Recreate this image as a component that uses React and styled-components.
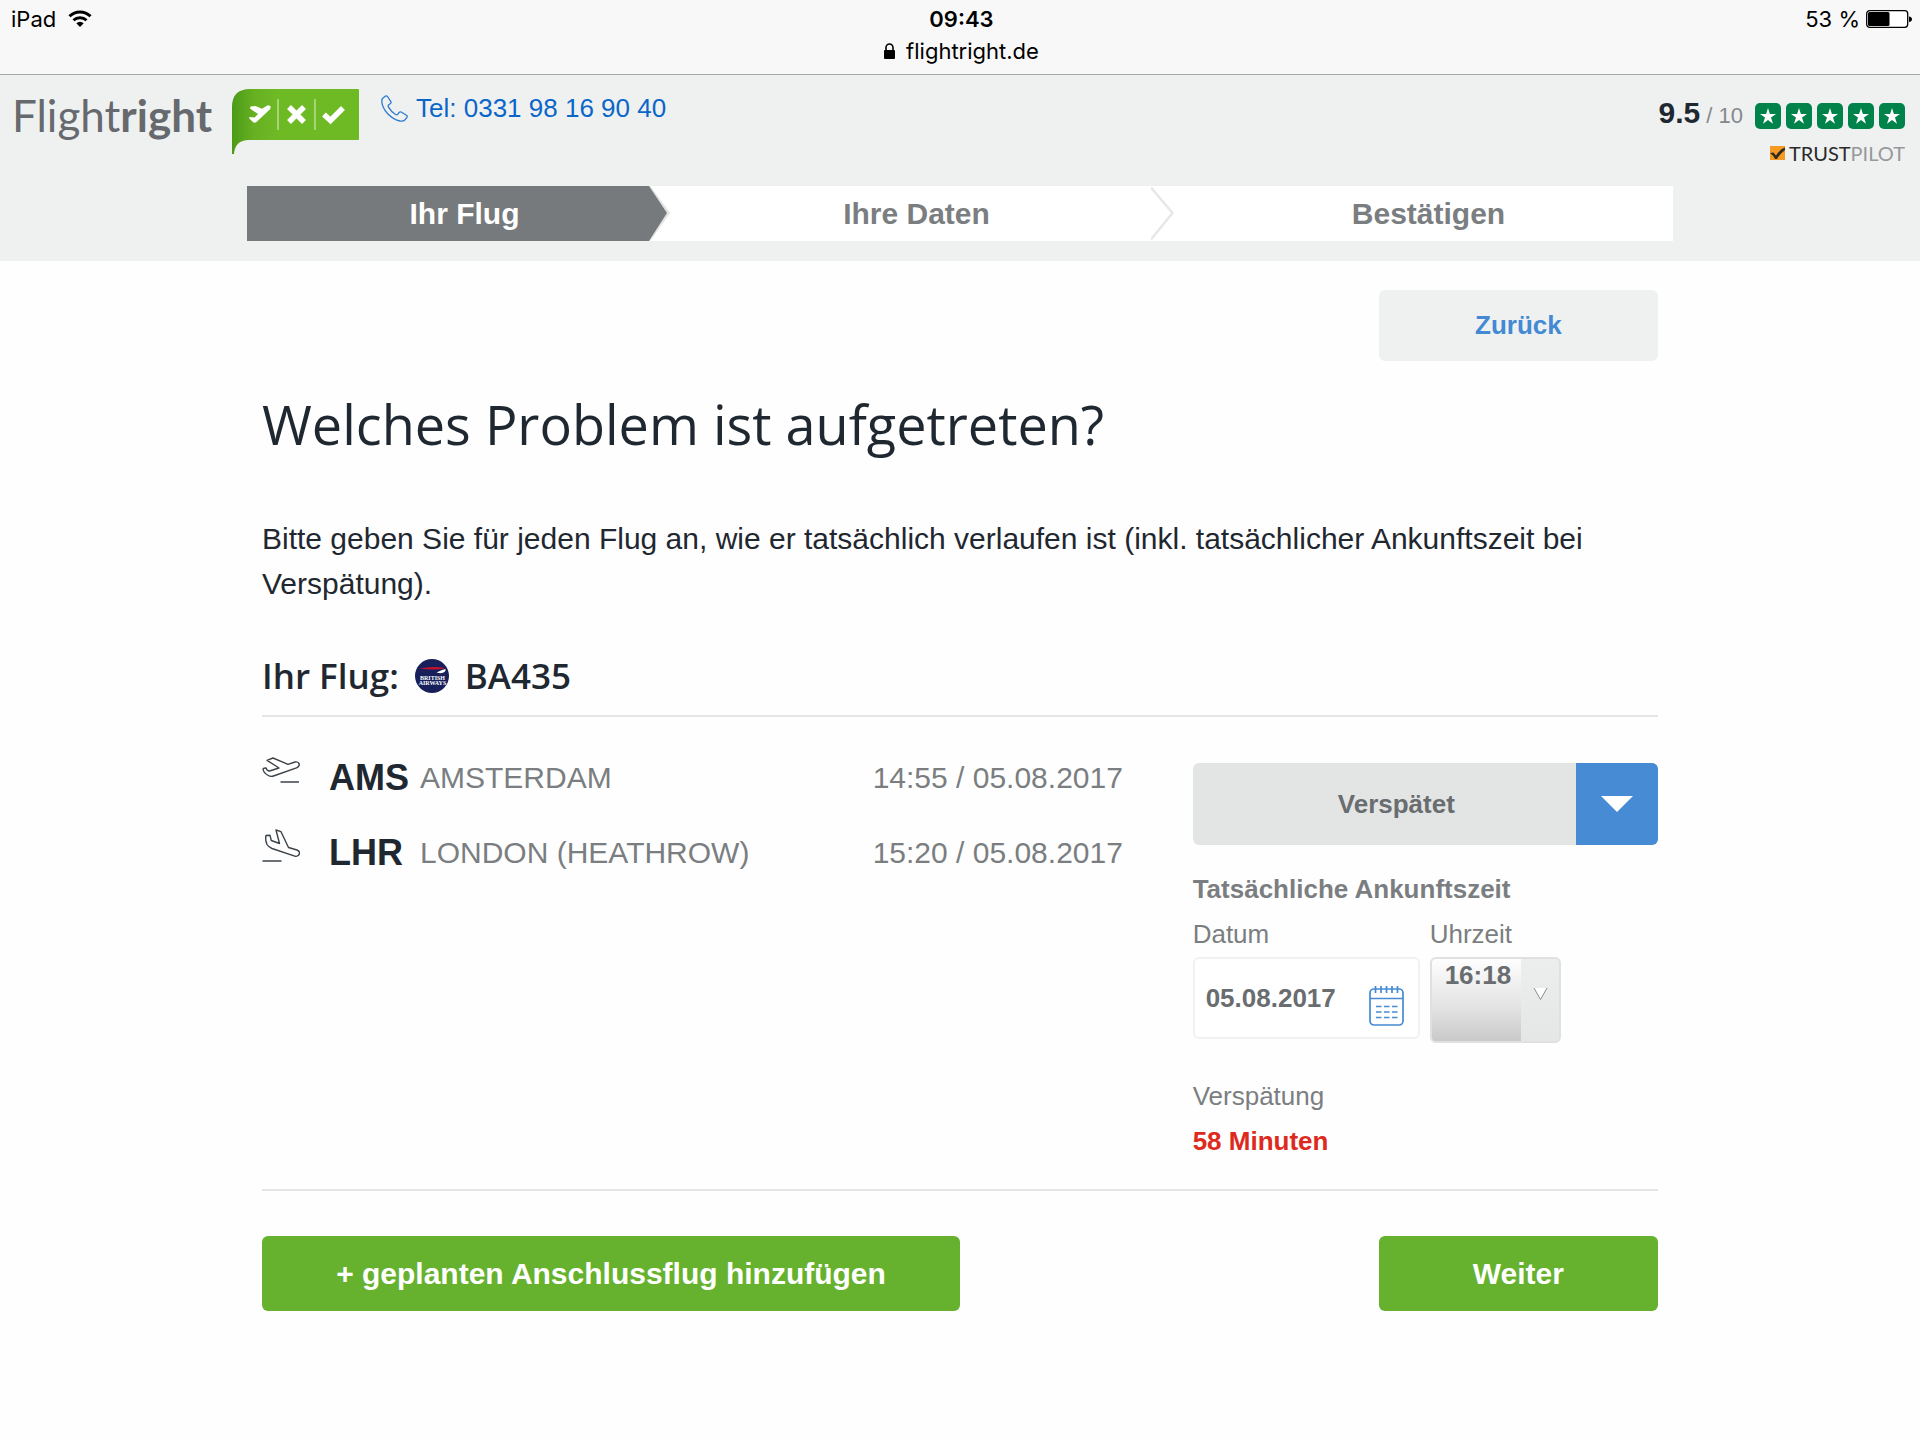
import React, { useState } from 'react';
import styled, { createGlobalStyle } from 'styled-components';

const GlobalStyle = createGlobalStyle`
    * {
        box-sizing: border-box;
    }
    body {
        margin: 0;
        background: #fefefe;
        color: #1f2830;
        font-family: "Liberation Sans", Arial, sans-serif;
    }
    button, input, select {
        font-family: inherit;
        margin: 0;
    }
    svg {
        display: block;
        flex: none;
    }
`

/* ---------- status bar ---------- */
const StatusBar = styled.div`
    display: grid;
    grid-template-columns: 1fr auto 1fr;
    align-items: start;
    height: 75px;
    padding: 6px 8px 0 11px;
    background: #f8f8f8;
    border-bottom: 1px solid #a6a7a8;
    color: #000;
    font-family: Inter, sans-serif;
    font-size: 22px;
    line-height: 26px;
`
const StatusItem = styled.div`
    display: flex;
    align-items: center;
    gap: ${props => props.$gap}px;
    justify-content: ${props => props.$end ? 'flex-end' : 'flex-start'};
`
const StatusCenter = styled.div`
    display: flex;
    flex-direction: column;
    align-items: center;
    gap: 6px;
`
const Clock = styled.div`
    font-weight: 600;
`

/* ---------- header ---------- */
const Header = styled.header`
    height: 186px;
    background: #eff1f1;
`
const HeaderTop = styled.div`
    display: flex;
    align-items: flex-start;
    height: 111px;
    padding: 14px 15px 0 12px;
`
const Brand = styled.a`
    display: flex;
    align-items: flex-start;
    gap: 20px;
    color: #66696e;
    text-decoration: none;
`
const BrandName = styled.span`
    font-family: Lato, sans-serif;
    font-size: 44px;
    font-weight: 400;
    line-height: 52px;
    b {
        font-weight: 700;
    }
`
const Phone = styled.a`
    display: flex;
    align-items: center;
    gap: 8px;
    margin: 4px 0 0 22px;
    color: #0a66c8;
    font-size: 26px;
    line-height: 30px;
    text-decoration: none;
`
const Rating = styled.div`
    display: flex;
    flex-direction: column;
    align-items: flex-end;
    gap: 1px;
    margin-left: auto;
`
const Score = styled.div`
    display: flex;
    align-items: baseline;
    color: #85888a;
    font-size: 22px;
    line-height: 48px;
    gap: 6px;
    b {
        color: #1f2830;
        font-size: 30px;
    }
`
const Stars = styled.span`
    display: flex;
    align-self: center;
    gap: 5px;
    margin: 2px 0 0 6px;
`
const Pilot = styled.div`
    display: flex;
    align-items: center;
    gap: 4px;
    color: #96989a;
    font-family: Lato, sans-serif;
    font-size: 20px;
    line-height: 24px;
    span {
        color: #2a2a2a;
    }
`

/* ---------- steps ---------- */
const Steps = styled.ol`
    display: grid;
    grid-template-columns: 402fr 502fr 522fr;
    max-width: 1426px;
    height: 55px;
    margin: 0 auto;
    padding: 0;
    list-style: none;
    background: #fff;
`
const Step = styled.li`
    position: relative;
    display: flex;
    align-items: center;
    justify-content: center;
    padding-left: 33px;
    background: ${props => props.$active ? '#777a7d' : 'transparent'};
    color: ${props => props.$active ? '#fff' : '#7b7e81'};
    font-size: 30px;
    font-weight: bold;
    svg {
        position: absolute;
        top: 0;
        left: 100%;
        z-index: 1;
    }
`

/* ---------- content ---------- */
const Main = styled.main`
    display: flex;
    flex-direction: column;
    max-width: 1396px;
    margin: 0 auto;
    padding-top: 29px;
`
const Button = styled.button`
    width: ${props => props.$wide ? '50%' : '20%'};
    height: ${props => props.$light ? 71 : 75}px;
    padding: 0;
    border: 0;
    border-radius: 6px;
    background: ${props => props.$light ? '#eff1f1' : '#66b22e'};
    color: ${props => props.$light ? '#4489d4' : '#fff'};
    font-size: ${props => props.$light ? 26 : 30}px;
    font-weight: bold;
    cursor: pointer;
`
const BackRow = styled.div`
    display: flex;
    justify-content: flex-end;
`
const Title = styled.h1`
    margin: 25px 0 0;
    font-family: "Open Sans", sans-serif;
    font-size: 54px;
    font-weight: 400;
    line-height: 76px;
`
const Intro = styled.p`
    margin: 54px 0 0;
    font-size: 30px;
    line-height: 45px;
`
const FlightTitle = styled.h2`
    display: flex;
    align-items: center;
    gap: 16px;
    margin: 46px 0 0;
    padding-bottom: 15px;
    border-bottom: 2px solid #e4e5e6;
    font-family: "Open Sans", sans-serif;
    font-size: 35px;
    font-weight: 600;
    line-height: 48px;
`
const Flight = styled.section`
    display: grid;
    grid-template-columns: 2fr 1fr;
    border-bottom: 2px solid #e4e5e6;
`
const Legs = styled.div`
    display: flex;
    flex-direction: column;
    padding-top: 23px;
`
const Leg = styled.div`
    display: grid;
    grid-template-columns: 67px 91px 1fr 320px;
    align-items: center;
    height: 75px;
    color: #7b7e81;
    font-size: 30px;
    b {
        color: #1f2830;
        font-size: 36px;
    }
    svg {
        margin-bottom: 16px;
    }
`
const Problem = styled.div`
    display: flex;
    flex-direction: column;
    padding: 46px 0 25px;
    color: #7b7e81;
    font-size: 26px;
    line-height: 45px;
`
const ProblemField = styled.div`
    position: relative;
    height: 82px;
    margin-bottom: 22px;
`
const ProblemSelect = styled.select`
    appearance: none;
    width: 100%;
    height: 100%;
    padding: 0 82px 0 24px;
    border: 0;
    border-radius: 6px;
    background: #e3e5e5;
    color: #696d70;
    font-size: 26px;
    font-weight: bold;
    text-align: center;
    text-align-last: center;
`
const ProblemArrow = styled.span`
    position: absolute;
    top: 0;
    right: 0;
    display: flex;
    align-items: center;
    justify-content: center;
    width: 82px;
    height: 82px;
    border-radius: 0 6px 6px 0;
    background: #468bd3;
    pointer-events: none;
`
const Arrival = styled.fieldset`
    margin: 0 0 31px;
    padding: 0;
    border: 0;
    legend {
        padding: 0;
        font-weight: bold;
    }
`
const ArrivalFields = styled.div`
    display: flex;
    align-items: flex-start;
    gap: 10px;
`
const Field = styled.div`
    position: relative;
    display: flex;
    flex-direction: column;
    width: ${props => props.$width}px;
`
const DateInput = styled.input`
    width: 100%;
    height: 82px;
    padding: 0 60px 0 11px;
    border: 2px solid #f0f1f1;
    border-radius: 6px;
    background: #fff;
    color: #696d70;
    font-size: 26px;
    font-weight: bold;
`
const CalendarIcon = styled.svg`
    position: absolute;
    right: 16px;
    bottom: 12px;
    pointer-events: none;
`
const TimeSelect = styled.select`
    appearance: none;
    width: 100%;
    height: 86px;
    padding: 0 40px 50px 13px;
    border: 2px solid #dfe1e1;
    border-radius: 6px;
    background:
        linear-gradient(#eceeee, #e5e7e7) right / 38px 100% no-repeat,
        linear-gradient(#fefefe, #e2e2e2 60%, #c9c9c9);
    color: #696d70;
    font-size: 26px;
    font-weight: bold;
`
const TimeArrow = styled.svg`
    position: absolute;
    right: 13px;
    bottom: 42px;
    pointer-events: none;
`
const Delay = styled.strong`
    color: #dd2a1d;
`
const Actions = styled.div`
    display: flex;
    justify-content: space-between;
    padding: 45px 0;
`

const Wifi = () => (
    <svg width="24" height="18" viewBox="0 0 24 18" fill="none" stroke="#000" strokeWidth="3">
        <path d="M1.500 6.200a15 15 0 0 1 21 0" />
        <path d="M5.500 10.300a9.300 9.300 0 0 1 13 0" />
        <path d="M8.300 13.300a5.300 5.300 0 0 1 7.400 0L12 17z" fill="#000" stroke="none" />
    </svg>
);

const Lock = () => (
    <svg width="11" height="16" viewBox="0 0 11 16">
        <rect y="7" width="11" height="9" rx="1" />
        <path d="M2 8V4.500a3.500 3.500 0 0 1 7 0V8" fill="none" stroke="#000" strokeWidth="1.600" />
    </svg>
);

const Battery = () => (
    <svg width="46" height="18" viewBox="0 0 46 18">
        <rect x="0.700" y="0.700" width="41" height="16.600" rx="3" fill="#fff" stroke="#000" strokeWidth="1.300" />
        <rect x="2" y="2" width="21.500" height="14" rx="1.500" />
        <path d="M43 6.500q3 .5 3 2.800t-3 2.700z" />
    </svg>
);

const LogoFlag = () => (
    <svg width="127" height="66" viewBox="0 0 127 66">
        <defs>
            <linearGradient id="flag" x1="0" x2="1">
                <stop offset="0" stopColor="#4b9a17" />
                <stop offset="0.170" stopColor="#67b022" />
                <stop offset="0.350" stopColor="#6eba25" />
            </linearGradient>
        </defs>
        <path d="M0 65V18Q0 0 18 0H126a1 1 0 0 1 1 1V50a1 1 0 0 1-1 1H17Q3 51 2 65z" fill="url(#flag)" />
        <path
            d="M18.500 17.500L23.500 17L30 19.800L35.800 16.300L38.600 17L38.300 20L24.500 33Q22.500 34.500 21 33L17.200 29.500L17.500 28L22.500 28.500L26 25L18 19.500z"
            fill="#fff"
        />
        <path d="M46 10v31M83 10v31" stroke="#c5e3a6" strokeWidth="1.300" />
        <path d="M57 18L72 33M72 18L57 33" stroke="#fff" strokeWidth="5.500" />
        <path d="M92 25.500L98.500 31.500L111 19" fill="none" stroke="#fff" strokeWidth="5.500" />
    </svg>
);

const PhoneIcon = () => (
    <svg width="27" height="27" viewBox="0 0 27 27" fill="none" stroke="#2b7ad0" strokeWidth="1.300" strokeLinejoin="round">
        <path d="M1.500 3.500L4.500 1Q5.500 .5 6.500 1.500L10 6.800Q10.300 7.800 9.500 8.500L7.500 10Q6.800 10.800 7.500 12.200Q10 16.500 14.500 19.500Q15.800 20.200 16.700 19.300L18.300 17.200Q19 16.500 20.200 17L25.500 20.300Q26.600 21.200 26 22.300L23.800 25Q22.500 26.300 19 26Q12.500 24.800 6.500 18.500Q.8 12 .8 6.200Q.8 4.300 1.500 3.500z" />
    </svg>
);

const Star = () => (
    <svg width="26" height="26" viewBox="0 0 26 26">
        <rect width="26" height="26" rx="5" fill="#00824b" />
        <path d="M13 5l1.900 6H21l-5 3.500 2 6.200-5-3.800-5 3.800 2-6.200L5 11h6.100z" fill="#fff" />
    </svg>
);

const PilotCheck = () => (
    <svg width="15" height="14" viewBox="0 0 15 14">
        <rect width="15" height="14" fill="#f59b23" />
        <path d="M0 7l3.500-.5L6 9.500Q10 3 15 1.500V4Q10 8 7 13H5Q3 9 0 7z" fill="#332c1e" />
    </svg>
);

const AirlineLogo = () => (
    <svg width="34" height="34" viewBox="0 0 34 34">
        <circle cx="17" cy="17" r="17" fill="#17205a" />
        <path d="M4.500 9.500Q16 7 28.500 8.500Q29.500 9 28 10Q16 11 4.500 9.500z" fill="#c8102e" />
        <path d="M30.500 10Q27 10.500 21.500 13.500Q27 15 29.500 13Q31 11.500 30.500 10z" fill="#fff" />
        <g fill="#fff" fontFamily="Liberation Serif, serif" fontSize="6" fontWeight="bold" textAnchor="middle">
            <text x="17.500" y="20.500">BRITISH</text>
            <text x="17.500" y="26">AIRWAYS</text>
        </g>
    </svg>
);

const legIcons = {
    takeoff: {
        box: '0 -3 38 34',
        path: 'M5 4.300L11 2L26 8.300L33 6Q36.300 5.300 37.200 8Q37.500 10.500 34.500 11.800L11.500 20Q8.500 21 6.300 19.500Q1.500 17 1 13Q1.300 11.800 4 12Q5 15 7.500 15L17 12zM18.500 26H37',
    },
    landing: {
        box: '0 0 38 34',
        path: 'M14 2L19 3.700L26.500 19.500L35 22Q37.800 23 37.500 25.500Q36.500 28.800 33.500 28.300L10 20.500Q6.500 19 5 16.500Q3 12 4 7.500L8 7.300L9.300 12.500L17.500 15.500zM0.500 33H19.500',
    },
};

const LegIcon = ({ type }) => (
    <svg width="38" height="34" viewBox={legIcons[type].box} fill="none" stroke="#3b4349" strokeWidth="1.400" strokeLinejoin="round">
        <path d={legIcons[type].path} />
    </svg>
);

const StepArrow = ({ active }) => (
    active ? (
        <svg width="22" height="55" viewBox="0 0 22 55">
            <path d="M0 0L20 27L0 55z" fill="#e3e5e5" stroke="#e3e5e5" strokeWidth="2" />
            <path d="M0 0L18 27L0 55z" fill="#777a7d" />
        </svg>
    ) : (
        <svg width="24" height="55" viewBox="0 0 24 55" fill="none" stroke="#e6e8e8" strokeWidth="2.500">
            <path d="M0 1.500L21.500 27L0 53.500" />
        </svg>
    )
);

const steps = ['Ihr Flug', 'Ihre Daten', 'Bestätigen'];

const legs = [
    { type: 'takeoff', code: 'AMS', city: 'AMSTERDAM', time: '14:55 / 05.08.2017' },
    { type: 'landing', code: 'LHR', city: 'LONDON (HEATHROW)', time: '15:20 / 05.08.2017' },
];

function App() {
    const [problem, setProblem] = useState('Verspätet');
    const [date, setDate] = useState('05.08.2017');
    const [time, setTime] = useState('16:18');

    return (
        <>
            <GlobalStyle />
            <StatusBar>
                <StatusItem $gap={12}>iPad <Wifi /></StatusItem>
                <StatusCenter>
                    <Clock>09:43</Clock>
                    <StatusItem $gap={11}><Lock /> flightright.de</StatusItem>
                </StatusCenter>
                <StatusItem $gap={6} $end>53 % <Battery /></StatusItem>
            </StatusBar>
            <Header>
                <HeaderTop>
                    <Brand href="#">
                        <BrandName>Flight<b>right</b></BrandName>
                        <LogoFlag />
                    </Brand>
                    <Phone href="tel:+4933198169040"><PhoneIcon /> Tel: 0331 98 16 90 40</Phone>
                    <Rating>
                        <Score>
                            <b>9.5</b> / 10
                            <Stars>{[1, 2, 3, 4, 5].map(n => <Star key={n} />)}</Stars>
                        </Score>
                        <Pilot><PilotCheck /><div><span>TRUST</span>PILOT</div></Pilot>
                    </Rating>
                </HeaderTop>
                <Steps>
                    {steps.map((step, i) => (
                        <Step key={step} $active={i === 0}>
                            {step}
                            {i < steps.length - 1 && <StepArrow active={i === 0} />}
                        </Step>
                    ))}
                </Steps>
            </Header>
            <Main>
                <BackRow>
                    <Button type="button" $light>Zurück</Button>
                </BackRow>
                <Title>Welches Problem ist aufgetreten?</Title>
                <Intro>
                    Bitte geben Sie für jeden Flug an, wie er tatsächlich verlaufen ist (inkl. tatsächlicher Ankunftszeit bei Verspätung).
                </Intro>
                <FlightTitle>Ihr Flug: <AirlineLogo /> BA435</FlightTitle>
                <Flight>
                    <Legs>
                        {legs.map(leg => (
                            <Leg key={leg.code}>
                                <LegIcon type={leg.type} />
                                <b>{leg.code}</b>
                                <span>{leg.city}</span>
                                <span>{leg.time}</span>
                            </Leg>
                        ))}
                    </Legs>
                    <Problem>
                        <ProblemField>
                            <ProblemSelect aria-label="Problem" value={problem} onChange={(e) => setProblem(e.target.value)}>
                                <option>Verspätet</option>
                                <option>Annulliert</option>
                            </ProblemSelect>
                            <ProblemArrow>
                                <svg width="32" height="16" viewBox="0 0 32 16"><path d="M0 0H32L16 16z" fill="#fff" /></svg>
                            </ProblemArrow>
                        </ProblemField>
                        <Arrival>
                            <legend>Tatsächliche Ankunftszeit</legend>
                            <ArrivalFields>
                                <Field $width={227}>
                                    <label htmlFor="date">Datum</label>
                                    <DateInput id="date" value={date} onChange={(e) => setDate(e.target.value)} />
                                    <CalendarIcon width="35" height="42" viewBox="0 0 35 42" fill="none" stroke="#468bd3" strokeWidth="1.700">
                                        <rect x="1" y="4" width="33" height="36" rx="4" />
                                        <path d="M1 13.500H34M6.500 1v7M12 1v7M17.500 1v7M23 1v7M28.500 1v7" />
                                        <path d="M7 21.500h5.500M15 21.500h5.500M23 21.500h5.500M7 27h5.500M15 27h5.500M23 27h5.500M7 32.500h5.500M15 32.500h5.500M23 32.500h5.500" />
                                    </CalendarIcon>
                                </Field>
                                <Field $width={131}>
                                    <label htmlFor="time">Uhrzeit</label>
                                    <TimeSelect id="time" value={time} onChange={(e) => setTime(e.target.value)}>
                                        <option>16:18</option>
                                        <option>16:19</option>
                                    </TimeSelect>
                                    <TimeArrow width="15" height="14" viewBox="0 0 15 14">
                                        <path d="M1 1H14L7.500 12.500z" fill="#fff" />
                                        <path d="M1 1L7.500 12.500L14 1" fill="none" stroke="#8b8e90" />
                                    </TimeArrow>
                                </Field>
                            </ArrivalFields>
                        </Arrival>
                        <span>Verspätung</span>
                        <Delay>58 Minuten</Delay>
                    </Problem>
                </Flight>
                <Actions>
                    <Button type="button" $wide>+ geplanten Anschlussflug hinzufügen</Button>
                    <Button type="button">Weiter</Button>
                </Actions>
            </Main>
        </>
    );
}

export default App;
